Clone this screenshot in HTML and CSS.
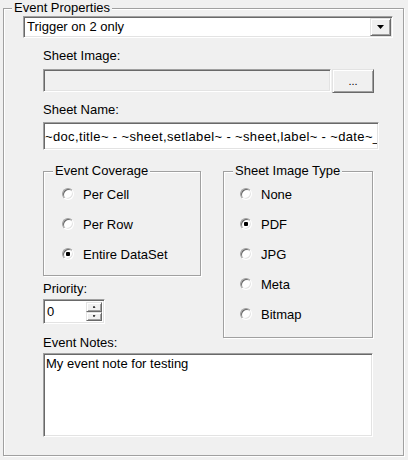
FILE: index.html
```html
<!DOCTYPE html>
<html lang="en">
<head>
  <meta charset="UTF-8">
  <title>Event Properties</title>
  <link rel="stylesheet" href="styles.css">
</head>
<body>

<fieldset class="panel">
  <legend>Event Properties</legend>
  <div class="combo">
    <span class="combo-text">Trigger on 2 only</span>
    <span class="combo-btn raised"><span class="arrow-down"></span></span>
  </div>

  <div class="body">
    <label class="lbl image-lbl">Sheet Image:</label>
    <div class="file-row">
      <input class="field file-input" type="text" disabled>
      <button class="raised browse">...</button>
    </div>

    <label class="lbl name-lbl">Sheet Name:</label>
    <input class="field name-input" type="text" value="~doc,title~ - ~sheet,setlabel~ - ~sheet,label~ - ~date~_~time~">

    <div class="columns">
      <div class="left-col">
        <fieldset class="group coverage">
          <legend>Event Coverage</legend>
          <div class="radio"><span class="radio-btn"></span>Per Cell</div>
          <div class="radio"><span class="radio-btn"></span>Per Row</div>
          <div class="radio"><span class="radio-btn checked"></span>Entire DataSet</div>
        </fieldset>

        <label class="lbl priority-lbl">Priority:</label>
        <div class="spin field">
          <input class="spin-input" type="text" value="0">
          <div class="spin-btns">
            <span class="raised spin-up"><span class="tiny-up"></span></span>
            <span class="raised spin-down"><span class="tiny-down"></span></span>
          </div>
        </div>

        <label class="lbl notes-lbl">Event Notes:</label>
      </div>

      <fieldset class="group image-type">
        <legend>Sheet Image Type</legend>
        <div class="radio"><span class="radio-btn"></span>None</div>
        <div class="radio"><span class="radio-btn checked"></span>PDF</div>
        <div class="radio"><span class="radio-btn"></span>JPG</div>
        <div class="radio"><span class="radio-btn"></span>Meta</div>
        <div class="radio"><span class="radio-btn"></span>Bitmap</div>
      </fieldset>
    </div>

    <textarea class="field notes">My event note for testing</textarea>
  </div>
</fieldset>

</body>
</html>
```

FILE: styles.css
```css
body {
  margin: 0;
  width: 408px;
  height: 460px;
  overflow: hidden;
  background-color: #f0f0f0;
  font-family: "Liberation Sans", Arial, sans-serif;
  font-size: 13px;
  color: #000;
}
input,
button,
textarea {
  font: inherit;
  color: #000;
  margin: 0;
}
legend {
  padding: 0 2px;
  line-height: 16px;
  background-color: #f0f0f0;
}

/* etched group frames */
.panel,
.group {
  border: 1px solid #a0a0a0;
  box-shadow: inset 1px 1px 0 #fff, 1px 1px 0 #fff;
  min-width: 0;
}
.panel {
  margin: 0 4px 0 3px;
  padding: 0 0 18px 0;
}
.panel > legend {
  margin-left: 8px;
}

/* sunken and raised 3d edges */
.field,
.combo {
  box-sizing: border-box;
  border: 1px solid;
  border-color: #a0a0a0 #fff #fff #a0a0a0;
  box-shadow: inset 1px 1px 0 #696969, inset -1px -1px 0 #e3e3e3;
  background-color: #fff;
  outline: none;
}
.raised {
  box-sizing: border-box;
  border: 1px solid;
  border-color: #e3e3e3 #696969 #696969 #e3e3e3;
  box-shadow: inset 1px 1px 0 #fff, inset -1px -1px 0 #a0a0a0;
  background-color: #f0f0f0;
}

.combo {
  display: flex;
  margin-left: 19px;
  width: 370px;
  height: 22px;
  padding: 1px;
}
.combo-text {
  flex: 1;
  padding-left: 2px;
  line-height: 18px;
}
.combo-btn {
  width: 21px;
  height: 18px;
  display: flex;
  align-items: center;
  justify-content: center;
}
.arrow-down {
  width: 7px;
  height: 4px;
  background-color: #000;
  clip-path: polygon(0 0, 100% 0, 50% 100%);
}

.body {
  padding-left: 39px;
}
.lbl {
  display: block;
  line-height: 15px;
}
.image-lbl {
  margin-top: 10px;
}
.file-row {
  display: flex;
  align-items: flex-start;
  margin-top: 6px;
}
.file-input {
  width: 288px;
  height: 23px;
  background-color: #f0f0f0;
}
.browse {
  width: 42px;
  height: 24px;
  margin-left: 1px;
  padding: 0;
  font-size: 11px;
  line-height: 20px;
}
.name-lbl {
  margin-top: 9px;
}
.name-input {
  margin-top: 5px;
  width: 336px;
  height: 28px;
  padding: 0 1px;
  letter-spacing: 0.35px;
}

.columns {
  display: flex;
  align-items: flex-start;
  gap: 22px;
  margin-top: 13px;
}
.group {
  margin: 0;
  padding: 0;
  box-sizing: border-box;
}
.group > legend {
  margin-left: 9px;
}
.coverage {
  width: 158px;
  padding-bottom: 6px;
}
.coverage .radio {
  padding-left: 18px;
}
.image-type {
  width: 150px;
  padding-bottom: 8px;
}
.image-type .radio {
  padding-left: 16px;
}
.radio {
  display: flex;
  align-items: center;
  height: 30px;
}
.radio-btn {
  box-sizing: border-box;
  width: 12px;
  height: 12px;
  margin-right: 9px;
  border-radius: 50%;
  border: 1px solid;
  border-color: #a0a0a0 #fff #fff #a0a0a0;
  box-shadow: inset 1px 1px 0 #696969, inset -1px -1px 0 #e3e3e3;
  background-color: #fff;
}
.radio-btn.checked {
  background: radial-gradient(circle, #000 0 2px, #fff 2.5px);
}

.priority-lbl {
  margin-top: 5px;
}
.spin {
  display: flex;
  width: 62px;
  height: 25px;
  margin-top: 3px;
  padding: 2px;
}
.spin-input {
  width: 38px;
  border: none;
  padding: 0 1px;
  background: #fff;
  outline: none;
}
.spin-btns {
  display: flex;
  flex-direction: column;
  width: 19px;
}
.spin-btns .raised {
  flex: 1;
  display: flex;
  align-items: center;
  justify-content: center;
}
.tiny-up,
.tiny-down {
  width: 3px;
  height: 2px;
  background-color: #000;
}
.tiny-up {
  clip-path: polygon(50% 0, 100% 100%, 0 100%);
}
.tiny-down {
  clip-path: polygon(0 0, 100% 0, 50% 100%);
}
.notes-lbl {
  margin-top: 11px;
}

.notes {
  display: block;
  margin-top: 3px;
  width: 330px;
  height: 84px;
  padding: 2px 2px;
  resize: none;
}
```
